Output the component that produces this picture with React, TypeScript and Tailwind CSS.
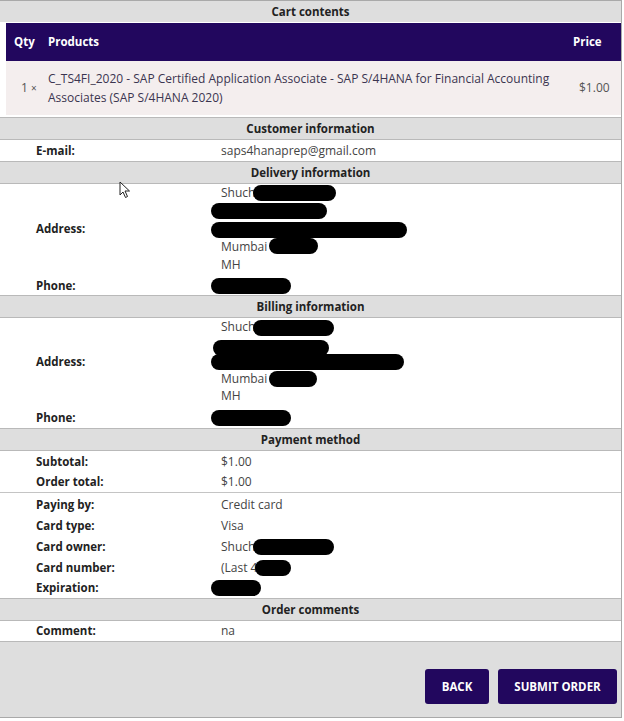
import React from "react";

type Row = {
    label: string
    value: React.ReactNode
    h?: string
}

type Line = {
    h: string
    content: React.ReactNode
}

function Blob({ w, h = 16, className = "" }: { w: number; h?: number; className?: string }) {
    return (
        <span
            className={`inline-block shrink-0 rounded-full bg-black ${className}`}
            style={{ width: w, height: h }}
        />
    );
}

function SectionHeader({ title }: { title: string }) {
    return (
        <div className="h-[23px] border-y border-[#b9b9b9] bg-[#dedede] text-center text-[11.5px] font-bold leading-[21px] text-[#222]">
            {title}
        </div>
    );
}

function InfoRow({ label, value, h = "h-[20px]" }: Row) {
    return (
        <div className={`flex items-center text-[12px] ${h}`}>
            <div className="w-[221px] pl-[36px] text-[11.5px] font-bold text-[#222]">{label}</div>
            <div className="flex items-center text-[#444]">{value}</div>
        </div>
    );
}

function AddressBlock({ lines, labelPad, phoneRow }: { lines: Line[]; labelPad: string; phoneRow: string }) {
    return (
        <div className="flex flex-col text-[12px]">
            <div className="flex items-center">
                <div className={`w-[221px] pl-[36px] text-[11.5px] font-bold text-[#222] ${labelPad}`}>Address:</div>
                <div className="flex flex-col text-[#444]">
                    {lines.map((line, i) => (
                        <div key={i} className={`flex items-center ${line.h}`}>{line.content}</div>
                    ))}
                </div>
            </div>
            <div className={`flex items-center ${phoneRow}`}>
                <div className="w-[221px] pl-[36px] text-[11.5px] font-bold text-[#222]">Phone:</div>
                <Blob w={80} className="-ml-[10px]" />
            </div>
        </div>
    );
}

function Cursor() {
    return (
        <svg className="absolute left-[119px] top-[181px]" width="13" height="18" viewBox="0 0 13 18">
            <path d="M1 1 L1 14 L4 11 L6.5 16.5 L8.5 15.5 L6 10 L10.5 10 Z" fill="white" stroke="#222" strokeWidth="1" strokeLinejoin="round" />
        </svg>
    );
}

export default function App() {
    const delivery: Line[] = [
        { h: "h-[18px]", content: <>Shuch<Blob w={83} className="-ml-[2px]" /></> },
        { h: "h-[18px]", content: <Blob w={116} className="-ml-[10px]" /> },
        { h: "h-[18px]", content: <Blob w={196} className="-ml-[10px] translate-y-[1px]" /> },
        { h: "h-[18px]", content: <>Mumbai<Blob w={49} className="ml-[2px] -translate-y-[1px]" /></> },
        { h: "h-[17px]", content: "MH" },
    ];

    const billing: Line[] = [
        { h: "h-[18px]", content: <>Shuch<Blob w={81} className="-ml-[2px] translate-y-[1px]" /></> },
        { h: "h-[17px]", content: <Blob w={116} className="-ml-[8px] translate-y-[3px]" /> },
        { h: "h-[17px]", content: <Blob w={193} className="-ml-[10px]" /> },
        { h: "h-[18px]", content: <>Mumbai<Blob w={48} className="ml-[2px]" /></> },
        { h: "h-[16px]", content: "MH" },
    ];

    const totals: Row[] = [
        { label: "Subtotal:", value: "$1.00" },
        { label: "Order total:", value: "$1.00" },
    ];

    return (
        <div className="relative h-[721px] w-[624px] bg-white" style={{ fontFamily: '"Open Sans", "Noto Sans", sans-serif' }}>
            <div className="w-[622px] border-r border-b border-t border-[#a9a9a9]">
                <div className="h-[21px] bg-[#dedede] text-center text-[11.5px] font-bold leading-[21px] text-[#222]">
                    Cart contents
                </div>
                <div className="pl-[6px] pt-[1px] pb-[2px]">
                    <div className="flex h-[38px] items-center bg-[#22075e] text-[11.5px] font-bold text-white">
                        <div className="w-[42px] pl-[8px]">Qty</div>
                        <div className="flex-1">Products</div>
                        <div className="w-[48px]">Price</div>
                    </div>
                    <div className="flex h-[54px] items-center bg-[#f4eeee] text-[12px] text-[#3b3550]">
                        <div className="w-[42px] pl-[15px] text-[#555]">1 <span className="text-[10px]">×</span></div>
                        <div className="flex-1 leading-[19px]">
                            C_TS4FI_2020 - SAP Certified Application Associate - SAP S/4HANA for Financial Accounting
                            <br />
                            Associates (SAP S/4HANA 2020)
                        </div>
                        <div className="w-[42px] text-[#555]">$1.00</div>
                    </div>
                </div>

                <SectionHeader title="Customer information" />
                <InfoRow label="E-mail:" value="saps4hanaprep@gmail.com" h="h-[21px]" />

                <SectionHeader title="Delivery information" />
                <AddressBlock lines={delivery} labelPad="pt-[1px]" phoneRow="h-[22px] pt-[3px]" />

                <SectionHeader title="Billing information" />
                <AddressBlock lines={billing} labelPad="pt-[1px]" phoneRow="h-[24px] pt-[3px]" />

                <SectionHeader title="Payment method" />
                <div className="border-b border-[#c4c4c4] pt-[1px]">
                    {totals.map((row, i) => (
                        <InfoRow key={i} label={row.label} value={row.value} />
                    ))}
                </div>
                <div className="pt-[1px]">
                    <InfoRow label="Paying by:" value="Credit card" h="h-[21px]" />
                    <InfoRow label="Card type:" value="Visa" h="h-[21px]" />
                    <InfoRow label="Card owner:" value={<>Shuch<Blob w={81} className="-ml-[2px]" /></>} h="h-[21px]" />
                    <InfoRow label="Card number:" value={<>(Last 4<Blob w={36} className="-ml-[2px]" /></>} h="h-[21px]" />
                    <InfoRow label="Expiration:" value={<Blob w={50} className="-ml-[10px]" />} />
                </div>

                <SectionHeader title="Order comments" />
                <InfoRow label="Comment:" value="na" />

                <div className="flex h-[76px] items-end justify-end gap-[9px] border-t border-[#b9b9b9] bg-[#dedede] pr-[4px] pb-[13px]">
                    <button className="h-[35px] w-[64px] rounded-[3px] bg-[#22075e] text-[11.5px] font-bold text-white">BACK</button>
                    <button className="h-[35px] w-[119px] rounded-[3px] bg-[#22075e] text-[11.5px] font-bold text-white">SUBMIT ORDER</button>
                </div>
            </div>
            <Cursor />
        </div>
    );
}
